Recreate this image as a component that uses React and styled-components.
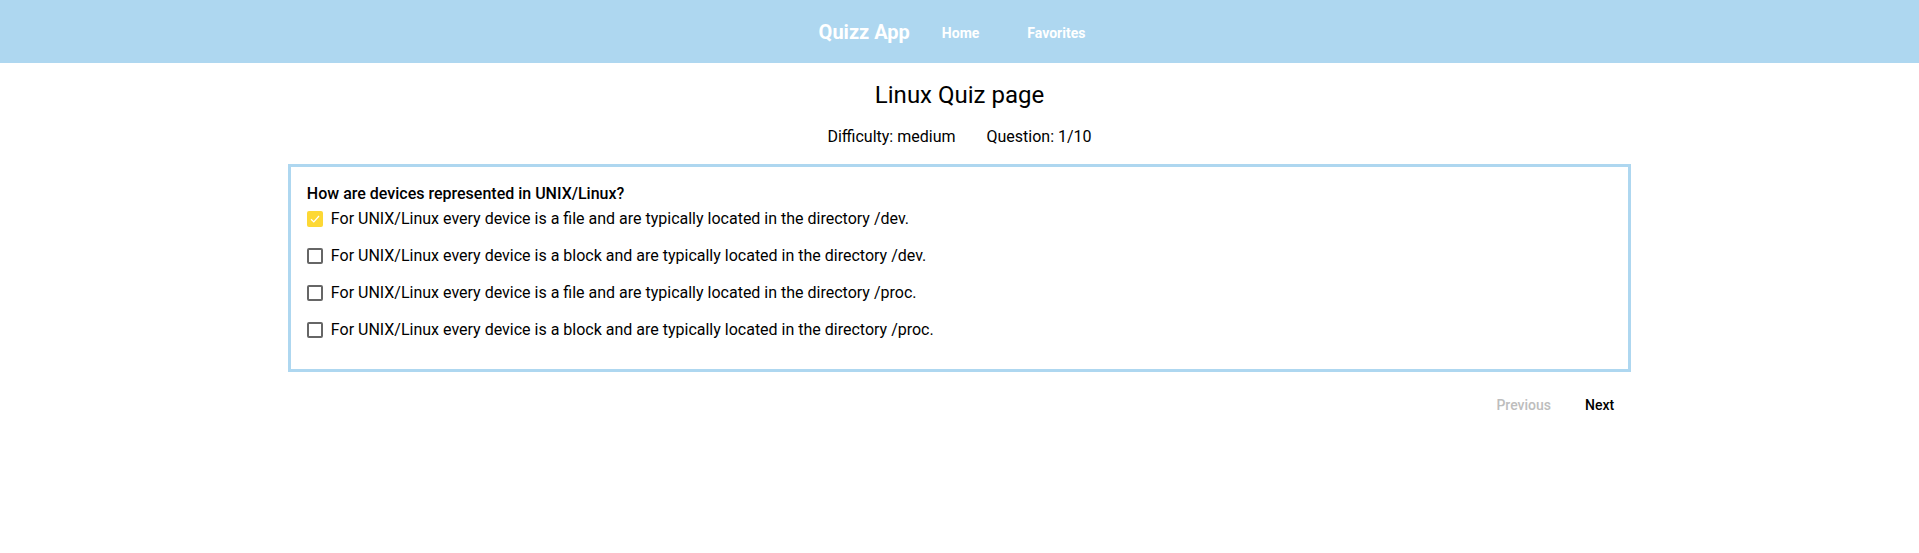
import React from "react";
import styled, { createGlobalStyle } from "styled-components";

const GlobalStyle = createGlobalStyle`
  html, body { margin: 0; padding: 0; background: #ffffff; }
  body { font-family: Roboto, "Liberation Sans", sans-serif; color: #000; }
  * { box-sizing: border-box; }
`;

const Header = styled.header`
  height: 63px;
  background: #aed7f0;
  display: flex;
  align-items: center;
  justify-content: center;
  padding-left: 9px;
`;

const Brand = styled.div`
  color: #fff;
  font-size: 20px;
  font-weight: 700;
  margin-right: 8px;
`;

const NavLink = styled.a`
  color: #fff;
  font-size: 14px;
  font-weight: 700;
  padding: 6px 24px;
  margin-top: 2px;
  text-decoration: none;
  cursor: pointer;
`;

const Main = styled.main`
  display: flex;
  flex-direction: column;
  align-items: center;
`;

const Title = styled.h1`
  margin: 18px 0 0;
  font-size: 24px;
  font-weight: 400;
  line-height: 28px;
`;

const Meta = styled.div`
  display: flex;
  gap: 31px;
  margin-top: 18px;
  font-size: 16px;
  line-height: 20px;
`;

const Card = styled.section`
  width: 70%;
  margin-top: 17px;
  border: 3px solid #aed7f0;
  padding: 17px 16px 29px;
  display: flex;
  flex-direction: column;
`;

const Question = styled.div`
  font-size: 16px;
  font-weight: 500;
  line-height: 20px;
  margin-bottom: 5px;
`;

const Options = styled.div`
  display: flex;
  flex-direction: column;
  gap: 17px;
`;

const OptionRow = styled.label`
  display: flex;
  align-items: center;
  gap: 8px;
  font-size: 16px;
  line-height: 20px;
  cursor: pointer;
`;

const Box = styled.span`
  width: 16px;
  height: 16px;
  border-radius: 2px;
  flex: none;
  display: inline-flex;
  align-items: center;
  justify-content: center;
  background: ${(p) => (p.$checked ? "#fdd835" : "transparent")};
  border: ${(p) => (p.$checked ? "none" : "2px solid #666")};
`;

const Pager = styled.div`
  width: 70%;
  display: flex;
  justify-content: flex-end;
  gap: 2px;
  padding-right: 1px;
  margin-top: 17px;
`;

const PageButton = styled.button`
  background: none;
  border: none;
  font-family: Roboto, "Liberation Sans", sans-serif;
  font-size: 14px;
  font-weight: 500;
  line-height: 20px;
  padding: 6px 16px;
  color: ${(p) => (p.disabled ? "#bdbdbd" : "#000")};
  cursor: ${(p) => (p.disabled ? "default" : "pointer")};
`;

const options = [
  "For UNIX/Linux every device is a file and are typically located in the directory /dev.",
  "For UNIX/Linux every device is a block and are typically located in the directory /dev.",
  "For UNIX/Linux every device is a file and are typically located in the directory /proc.",
  "For UNIX/Linux every device is a block and are typically located in the directory /proc.",
];

function Check({ checked }) {
  return (
    <Box $checked={checked}>
      {checked && (
        <svg width="12" height="12" viewBox="0 0 12 12">
          <path d="M2 6.3 L4.8 9 L10 3" fill="none" stroke="#fff" strokeWidth="1.2" />
        </svg>
      )}
    </Box>
  );
}

export default function App() {
  return (
    <>
      <GlobalStyle />
      <Header>
        <Brand>Quizz App</Brand>
        <NavLink>Home</NavLink>
        <NavLink>Favorites</NavLink>
      </Header>
      <Main>
        <Title>Linux Quiz page</Title>
        <Meta>
          <span>Difficulty: medium</span>
          <span>Question: 1/10</span>
        </Meta>
        <Card>
          <Question>How are devices represented in UNIX/Linux?</Question>
          <Options>
            {options.map((o, i) => (
              <OptionRow key={i}>
                <Check checked={i === 0} />
                <span>{o}</span>
              </OptionRow>
            ))}
          </Options>
        </Card>
        <Pager>
          <PageButton disabled>Previous</PageButton>
          <PageButton>Next</PageButton>
        </Pager>
      </Main>
    </>
  );
}
